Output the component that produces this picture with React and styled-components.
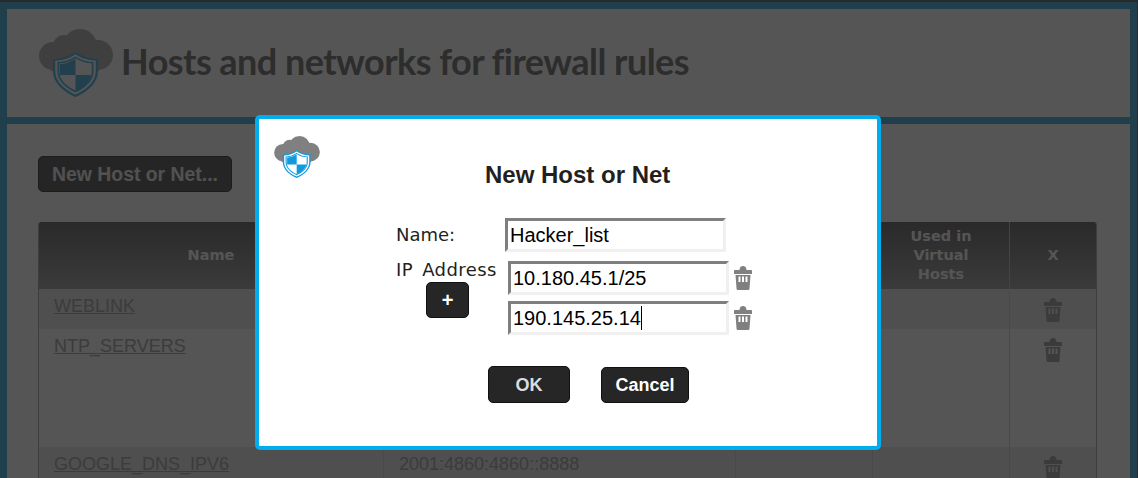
import React from 'react';
import styled, { createGlobalStyle } from 'styled-components';

const GlobalStyle = createGlobalStyle`
	html, body {
		margin: 0;
		padding: 0;
		height: 478px;
		overflow: hidden;
		background: #787878;
		font-family: "Liberation Sans", Arial, sans-serif;
	}
`;

const Shell = styled.div`
	box-sizing: border-box;
	width: 1138px;
	height: 478px;
	overflow: hidden;
	display: flex;
	flex-direction: column;
	gap: 7px;
	padding: 7px 7px 0 7px;
	background: #59b4dc;
	border-top: 2px solid #787878;
	border-right: 1px solid #787878;
`;

const Panel = styled.div`
	background: #f3f3f3;
`;

const HeaderPanel = styled(Panel)`
	display: flex;
	align-items: center;
	gap: 8px;
	height: 108px;
	padding-left: 32px;
	flex-shrink: 0;
`;

const PageTitle = styled.h1`
	margin: 0 0 4px;
	font-family: Lato, sans-serif;
	font-size: 36px;
	font-weight: 700;
	letter-spacing: -0.55px;
	color: #818181;
	white-space: nowrap;
`;

const ContentPanel = styled(Panel)`
	flex: 1;
	padding: 32px 33px 0 31px;
`;

const DarkButton = styled.button`
	box-sizing: border-box;
	display: block;
	padding: ${props => props.textDrop || 0}px 0 0;
	width: ${props => props.width}px;
	height: ${props => props.height}px;
	border: 1px solid #111;
	border-radius: 5px;
	background: #262626;
	color: ${props => props.color || '#fff'};
	font-family: "Liberation Sans", Arial, sans-serif;
	font-size: 18px;
	font-weight: 700;
`;

const NewButton = styled.button`
	display: block;
	box-sizing: border-box;
	width: 194px;
	height: 36px;
	padding: 0;
	border: 1px solid #505050;
	border-radius: 5px;
	background: #6c6c6c;
	color: #e8e8e8;
	font-family: "Liberation Sans", Arial, sans-serif;
	font-size: 19.4px;
	font-weight: 700;
`;

const Table = styled.div`
	margin-top: 30px;
	border-left: 1px solid #b0b0b0;
	border-right: 1px solid #b0b0b0;
	border-radius: 3px 3px 0 0;
	overflow: hidden;
`;

const columns = '344px 352px 137px 137px 87px';

const HeadRow = styled.div`
	display: grid;
	grid-template-columns: ${columns};
	height: 67px;
	background: linear-gradient(#787878, #a8a8a8);
`;

const HeadCell = styled.div`
	display: flex;
	align-items: center;
	justify-content: center;
	text-align: center;
	font-family: "DejaVu Sans", sans-serif;
	font-size: 14.5px;
	line-height: 19px;
	font-weight: 700;
	color: #f3f3f3;
	border-left: ${props => (props.first ? 'none' : '1px solid #c4c4c4')};
`;

const Row = styled.div`
	display: grid;
	grid-template-columns: ${columns};
	height: ${props => props.height}px;
	background: ${props => (props.odd ? '#e2e2e2' : '#f3f3f3')};
`;

const Cell = styled.div`
	padding: 6px 15px 0;
	font-size: 18px;
	line-height: 22px;
	color: #ababab;
	border-left: ${props => (props.first ? 'none' : '1px solid #d2d2d2')};
`;

const CenterCell = styled(Cell)`
	display: flex;
	justify-content: center;
	padding: 9px 0 0;
`;

const RowLink = styled.a`
	color: #ababab;
	text-decoration: underline;
`;

const Overlay = styled.div`
	position: fixed;
	inset: 0;
	background: rgba(0, 0, 0, 0.65);
`;

const Modal = styled.div`
	position: absolute;
	left: 255px;
	top: 115px;
	box-sizing: border-box;
	width: 626px;
	height: 335px;
	padding: 17px 0 0 15px;
	background: #fff;
	border: 4px solid #00aeef;
	border-radius: 5px;
`;

const ModalHead = styled.div`
	display: flex;
	align-items: flex-start;
	height: 52px;
`;

const ModalTitle = styled.h2`
	margin: 25px 0 0 165px;
	font-size: 24px;
	line-height: 27px;
	font-weight: 700;
	color: #231f20;
	white-space: nowrap;
`;

const Form = styled.div`
	margin: 30px 0 0 122px;
`;

const NameRow = styled.div`
	display: flex;
	align-items: center;
`;

const FieldLabel = styled.label`
	display: block;
	width: ${props => props.width}px;
	font-family: "DejaVu Sans", sans-serif;
	font-size: 18px;
	line-height: 22px;
	color: #231f20;
	white-space: pre;
`;

const IpLabel = styled(FieldLabel)`
	margin-top: -2px;
	letter-spacing: 0.4px;
	word-spacing: -1.5px;
`;

const TextInput = styled.input`
	box-sizing: border-box;
	width: 221px;
	height: 34px;
	padding: 1px 2px;
	border-style: solid;
	border-width: 3px;
	border-color: #7f7f7f #f0f0f0 #f0f0f0 #7f7f7f;
	background: #fff;
	color: #000;
	font-family: "Liberation Sans", Arial, sans-serif;
	font-size: 20px;
	outline: none;
`;

const IpSection = styled.div`
	display: flex;
	margin-top: 9px;
`;

const IpLabelColumn = styled.div`
	width: 112px;
`;

const PlusButton = styled(DarkButton)`
	margin: 1px 0 0 30px;
	font-size: 20px;
`;

const IpList = styled.div`
	display: flex;
	flex-direction: column;
	gap: 6px;
`;

const IpRow = styled.div`
	position: relative;
	display: flex;
	align-items: center;
	gap: 5px;
`;

const Caret = styled.span`
	position: absolute;
	left: 133px;
	top: 5px;
	width: 1px;
	height: 24px;
	background: #000;
`;

const ModalFooter = styled.div`
	display: flex;
	align-items: flex-start;
	gap: 31px;
	margin: 31px 0 0 214px;
`;

const CancelButton = styled(DarkButton)`
	margin-top: 1px;
`;

const TrashIcon = ({ color }) => (
	<svg width="18" height="24" viewBox="0 0 18 24">
		<path
			fill={color}
			fillRule="evenodd"
			d="M5.5 4 C5.5 1.6 7 0 9 0 C11 0 12.5 1.6 12.5 4 H17 C17.6 4 18 4.4 18 5 V8 H0 V5 C0 4.4 .4 4 1 4 Z M1.5 9 H16.5 L15.5 22.5 C15.4 23.5 14.8 24 14 24 H4 C3.2 24 2.6 23.5 2.5 22.5 Z M4.5 10.5 V16 H6.5 V10.5 Z M8 10.5 V16 H10 V10.5 Z M11.5 10.5 V16 H13.5 V10.5 Z"
		/>
	</svg>
);

const shield = 'M36.5 23 C44 28 52 30 59 30 V42 C59 54 48 63 36.5 68 C25 63 14 54 14 42 V30 C21 30 29 28 36.5 23 Z';

const insetShield = (scale) => `translate(36.5 45) scale(${scale}) translate(-36.5 -45)`;

const Logo = ({ width, height, cloud, blue, gap }) => (
	<svg width={width} height={height} viewBox="0 0 74 68">
		<g fill={cloud}>
			<circle cx="14" cy="27" r="14" />
			<circle cx="25" cy="17" r="11" />
			<circle cx="41" cy="17" r="17" />
			<circle cx="59" cy="26" r="15" />
			<rect x="12" y="20" width="48" height="22" />
		</g>
		<path d={shield} fill={blue} />
		<path d={shield} fill={gap} transform={insetShield(0.9)} />
		<path d={shield} fill={blue} transform={insetShield(0.8)} />
		<path d={shield} fill={gap} transform={insetShield(0.72)} />
		<path d="M36.5 30 C31 33 26 35 21 35 V46 H36.5 Z" fill={blue} />
		<path d="M36.5 46 H52 C51 53 44 59 36.5 62 Z" fill={blue} />
	</svg>
);

const App = () => (
	<>
		<GlobalStyle />
		<Shell>
			<HeaderPanel>
				<Logo width={74} height={68} cloud="#b4b4b4" blue="#5fb4dc" gap="#f3f3f3" />
				<PageTitle>Hosts and networks for firewall rules</PageTitle>
			</HeaderPanel>
			<ContentPanel>
				<NewButton>New Host or Net...</NewButton>
				<Table>
					<HeadRow>
						<HeadCell first>Name</HeadCell>
						<HeadCell />
						<HeadCell />
						<HeadCell>Used in<br />Virtual<br />Hosts</HeadCell>
						<HeadCell>X</HeadCell>
					</HeadRow>
					<Row height={40} odd>
						<Cell first><RowLink href="#t">WEBLINK</RowLink></Cell>
						<Cell />
						<Cell />
						<Cell />
						<CenterCell><TrashIcon color="#a8a8a8" /></CenterCell>
					</Row>
					<Row height={118}>
						<Cell first><RowLink href="#t">NTP_SERVERS</RowLink></Cell>
						<Cell />
						<Cell />
						<Cell />
						<CenterCell><TrashIcon color="#a8a8a8" /></CenterCell>
					</Row>
					<Row height={40} odd>
						<Cell first><RowLink href="#t">GOOGLE_DNS_IPV6</RowLink></Cell>
						<Cell>2001:4860:4860::8888</Cell>
						<Cell />
						<Cell />
						<CenterCell><TrashIcon color="#a8a8a8" /></CenterCell>
					</Row>
				</Table>
			</ContentPanel>
		</Shell>
		<Overlay>
			<Modal>
				<ModalHead>
					<Logo width={46} height={42} cloud="#808080" blue="#0f9ae0" gap="#fff" />
					<ModalTitle>New Host or Net</ModalTitle>
				</ModalHead>
				<Form>
					<NameRow>
						<FieldLabel width={109}>Name:</FieldLabel>
						<TextInput defaultValue="Hacker_list" />
					</NameRow>
					<IpSection>
						<IpLabelColumn>
							<IpLabel>IP  Address</IpLabel>
							<PlusButton width={43} height={36}>+</PlusButton>
						</IpLabelColumn>
						<IpList>
							<IpRow>
								<TextInput defaultValue="10.180.45.1/25" />
								<TrashIcon color="#808080" />
							</IpRow>
							<IpRow>
								<TextInput defaultValue="190.145.25.14" />
								<Caret />
								<TrashIcon color="#808080" />
							</IpRow>
						</IpList>
					</IpSection>
				</Form>
				<ModalFooter>
					<DarkButton width={82} height={37} color="#ddd" textDrop={2}>OK</DarkButton>
					<CancelButton width={88} height={36}>Cancel</CancelButton>
				</ModalFooter>
			</Modal>
		</Overlay>
	</>
);

export default App;
